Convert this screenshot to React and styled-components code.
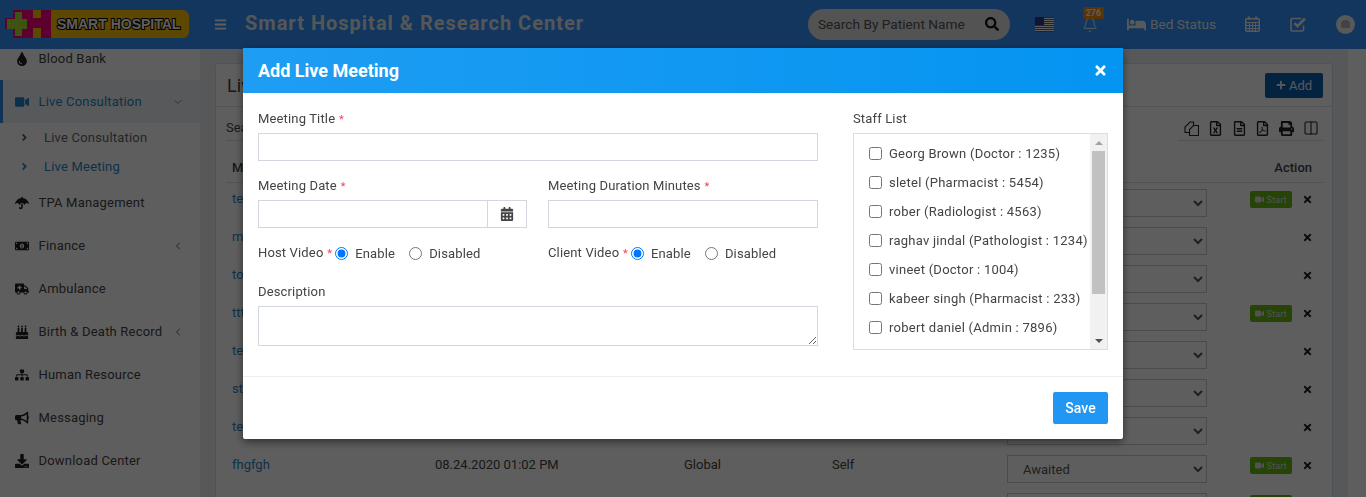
import styled, { createGlobalStyle } from 'styled-components';
import {
	FaAmbulance,
	FaAngleRight,
	FaBars,
	FaBed,
	FaBirthdayCake,
	FaBullhorn,
	FaCalendarAlt,
	FaDownload,
	FaMoneyBillAlt,
	FaPlus,
	FaPrint,
	FaRegFileAlt,
	FaRegFileExcel,
	FaRegFilePdf,
	FaSearch,
	FaSitemap,
	FaTimes,
	FaTint,
	FaUmbrella,
	FaVideo,
} from 'react-icons/fa';
import { Bell, ChevronDown, ChevronLeft, Columns2 } from 'lucide-react';

const GlobalStyle = createGlobalStyle`
	* {
		box-sizing: border-box;
	}
	html, body {
		margin: 0;
		height: 100%;
		overflow: hidden;
		font-family: Roboto, "Liberation Sans", sans-serif;
		font-size: 13px;
		color: #444;
	}
`;

const SPage = styled.div`
	height: 497px;
	overflow: hidden;
	background: #eef1f4;
	display: flex;
	flex-direction: column;
`;

const STopBar = styled.header`
	flex: 0 0 49px;
	display: flex;
	align-items: center;
	padding-bottom: 1px;
	background: #3392fb;
	color: #fff;
	position: relative;
	z-index: 2;
`;

const SLogo = styled.div`
	width: 184px;
	height: 28px;
	margin-left: 5px;
	display: flex;
	align-items: stretch;
	flex: none;
`;

const SLogoText = styled.div`
	flex: 1;
	background: #ffc000;
	border-radius: 0 6px 6px 0;
	font-family: "Liberation Sans", sans-serif;
	font-weight: 700;
	font-size: 14px;
	color: #fff;
	-webkit-text-stroke: 2px #000;
	paint-order: stroke fill;
	display: flex;
	align-items: center;
	padding-left: 6px;
	white-space: nowrap;
`;

const SMenuToggle = styled.div`
	margin-left: 25px;
	font-size: 13px;
	display: flex;
	color: #fff;
`;

const STitle = styled.div`
	margin-left: 18px;
	position: relative;
	top: -1px;
	font-size: 20px;
	font-weight: 700;
	letter-spacing: 1px;
	color: #e4e8ec;
	white-space: nowrap;
`;

const SSearch = styled.div`
	margin-left: auto;
	width: 202px;
	height: 31px;
	border-radius: 16px;
	background: #e0e0e0;
	display: flex;
	align-items: center;
	justify-content: space-between;
	padding: 0 11px 0 10px;
	color: #555;
	font-size: 13.7px;
	svg {
		color: #111;
		font-size: 14px;
	}
`;

const SFlag = styled.svg`
	width: 19px;
	height: 15px;
	margin-left: 25px;
`;

const SBell = styled.div`
	position: relative;
	margin-left: 28px;
	width: 16px;
	display: flex;
	top: 1px;
`;

const SBadge = styled.span`
	position: absolute;
	top: -10px;
	left: 1px;
	width: 21px;
	height: 12px;
	border-radius: 2px;
	background: #f58b12;
	font-size: 9px;
	font-weight: 700;
	line-height: 12px;
	text-align: center;
`;

const SBedStatus = styled.div`
	margin-left: 29px;
	display: flex;
	align-items: center;
	gap: 4px;
	font-size: 13.7px;
	color: #eef1f4;
	svg {
		font-size: 19px;
	}
`;

const SNavIcon = styled.svg`
	margin-left: ${({ $gap }) => $gap}px;
	width: ${({ $width }) => $width}px;
	height: 16px;
	color: #eef1f4;
	flex: none;
`;

const SAvatar = styled.div`
	width: 19px;
	height: 19px;
	border-radius: 50%;
	background: #f0f0f0;
	margin: 0 11px 0 29px;
	display: flex;
	align-items: center;
	justify-content: center;
	&::after {
		content: '';
		width: 9px;
		height: 8px;
		border-radius: 4px 4px 1px 1px;
		background: #b5b5b5;
	}
`;

const SMain = styled.div`
	flex: 1;
	display: flex;
	min-height: 0;
`;

const SSidebar = styled.nav`
	flex: 0 0 200px;
	background: #fff;
	overflow: hidden;
`;

const SMenu = styled.ul`
	list-style: none;
	margin: -12px 0 0;
	padding: 0;
`;

const SMenuItem = styled.li`
	height: 43px;
	display: flex;
	align-items: center;
	padding-left: ${({ $active }) => ($active ? 12 : 15)}px;
	padding-right: 16px;
	border-left: ${({ $active }) => ($active ? '3px solid #2f8ee8' : 'none')};
	background: ${({ $active }) => ($active ? '#eef1f4' : '#fff')};
	color: ${({ $active }) => ($active ? '#1f86c8' : '#444')};
	font-size: 13px;
	letter-spacing: 0.2px;
	svg {
		flex: none;
	}
`;

const SMenuIcon = styled.span`
	flex: 0 0 23.5px;
	display: flex;
	font-size: 14px;
	color: ${({ $active }) => ($active ? '#1f86c8' : '#222')};
`;

const SMenuLabel = styled.span`
	flex: 1;
	white-space: nowrap;
`;

const SSubMenu = styled.ul`
	list-style: none;
	margin: 0;
	padding: 0;
`;

const SSubItem = styled.li`
	height: 29px;
	display: flex;
	align-items: center;
	padding-left: 19px;
	gap: 16px;
	font-size: 13px;
	letter-spacing: 0.2px;
	color: ${({ $active }) => ($active ? '#1f86c8' : '#666')};
	svg {
		font-size: 11px;
		margin-right: -2px;
		color: ${({ $active }) => ($active ? '#1f86c8' : '#555')};
	}
`;

const SContent = styled.main`
	flex: 1;
	padding: 14px 15px 0;
	background: #eaeef2;
	min-width: 0;
`;

const SRightStrip = styled.div`
	flex: 0 0 18px;
	background: #fff;
`;

const SPanel = styled.section`
	background: #fff;
	border: 1px solid #d9dee3;
	border-radius: 3px 3px 0 0;
	padding-bottom: 20px;
`;

const SPanelHead = styled.div`
	height: 43px;
	display: flex;
	align-items: center;
	justify-content: space-between;
	padding: 0 9px 0 11px;
	border-bottom: 1px solid #e2e2e2;
	font-size: 18px;
`;

const SAddButton = styled.button`
	width: 58px;
	height: 25px;
	border: 0;
	border-radius: 2px;
	background: #0a5fb0;
	color: #e8f0f8;
	font: 13px Roboto, sans-serif;
	display: flex;
	align-items: center;
	justify-content: center;
	gap: 3px;
	svg {
		font-size: 10px;
	}
`;

const SPanelBody = styled.div`
	padding: 0 9px 0 10px;
`;

const SToolRow = styled.div`
	height: 34px;
	display: flex;
	align-items: flex-end;
	justify-content: space-between;
	font-size: 13px;
`;

const SSearchLabel = styled.div`
	padding-bottom: 5px;
	border-bottom: 1px solid #ddd;
	width: 160px;
`;

const STools = styled.div`
	width: 145px;
	height: 25px;
	padding: 0 4px 0 6px;
	display: flex;
	align-items: center;
	justify-content: space-between;
	border-bottom: 1px solid #ddd;
	font-size: 15px;
	color: #222;
`;

const SRow = styled.div`
	display: grid;
	grid-template-columns: 203px 249px 148px 175px 212px 1fr;
	align-items: flex-start;
	height: ${({ $head }) => ($head ? 42 : 38)}px;
	padding-top: ${({ $head }) => ($head ? 17 : 6)}px;
	border-bottom: ${({ $head }) => ($head ? '1px solid #ddd' : 'none')};
	font-weight: ${({ $head }) => ($head ? 500 : 400)};
	font-size: 13px;
`;

const SCell = styled.div`
	padding: 2px 6px 0;
	white-space: nowrap;
`;

const SNameCell = styled(SCell)`
	color: #1f86c8;
`;

const SSelectCell = styled.div`
	padding-left: 6px;
`;

const SStatus = styled.select`
	width: 200px;
	height: 28px;
	margin-top: 0;
	padding-left: 11px;
	border: 1px solid #ccc;
	background: #fff;
	color: #555;
	font: 13px Roboto, sans-serif;
`;

const SAction = styled.div`
	display: flex;
	justify-content: flex-end;
	align-items: center;
	gap: 10px;
	height: 20px;
	padding-right: 10px;
	font-size: 11px;
	color: #222;
	text-align: right;
`;

const SActionHead = styled(SCell)`
	text-align: right;
	padding-right: 11px;
`;

const SStartButton = styled.button`
	width: 42px;
	height: 17px;
	padding: 0;
	border: 0;
	border-radius: 2px;
	background: #66b812;
	color: #ddd;
	font: 9.5px Roboto, sans-serif;
	display: flex;
	align-items: center;
	justify-content: center;
	gap: 2px;
	svg {
		font-size: 9px;
	}
`;

const SBackdrop = styled.div`
	position: fixed;
	inset: 0;
	z-index: 10;
	background: rgba(0, 0, 0, 0.63);
	display: flex;
	justify-content: center;
	align-items: flex-start;
	padding-top: 48px;
`;

const SModal = styled.div`
	width: 880px;
	height: 391px;
	background: #fff;
	border-radius: 2px;
	box-shadow: 0 3px 9px rgba(0, 0, 0, 0.5);
	display: flex;
	flex-direction: column;
`;

const SModalHead = styled.div`
	flex: 0 0 45px;
	display: flex;
	align-items: center;
	justify-content: space-between;
	padding: 0 15px;
	background: linear-gradient(to right, #1e9df3, #0494f1);
	color: #fff;
`;

const SModalTitle = styled.h4`
	margin: 0;
	font-size: 18px;
	font-weight: 700;
`;

const SClose = styled.button`
	padding: 0;
	border: 0;
	background: none;
	color: #fff;
	font-size: 15px;
	display: flex;
`;

const SModalBody = styled.div`
	flex: 0 0 284px;
	display: grid;
	grid-template-columns: 560px 255px;
	justify-content: space-between;
	padding: 18px 15px 0;
	border-bottom: 1px solid #eee;
`;

const SFormGrid = styled.div`
	display: grid;
	grid-template-columns: 269px 270px;
	justify-content: space-between;
	align-content: flex-start;
`;

const SField = styled.div`
	grid-column: ${({ $wide }) => ($wide ? '1 / -1' : 'auto')};
	height: ${({ $height }) => $height}px;
`;

const SLabel = styled.label`
	display: block;
	height: 15px;
	margin-bottom: 7px;
	line-height: 15px;
	color: #444;
	letter-spacing: 0.15px;
	white-space: nowrap;
`;

const SRequired = styled.span`
	color: #f5405a;
	margin-left: 1px;
	font-size: 11px;
`;

const SInput = styled.input`
	display: block;
	width: 100%;
	height: 28px;
	border: 1px solid #d2d6de;
	background: #fff;
	outline: 0;
`;

const SInputGroup = styled.div`
	display: flex;
	${SInput} {
		flex: 1;
		min-width: 0;
		border-right: 0;
	}
`;

const SAddon = styled.span`
	flex: 0 0 40px;
	height: 28px;
	border: 1px solid #d2d6de;
	display: flex;
	align-items: center;
	justify-content: center;
	color: #444;
	font-size: 14px;
`;

const SRadioRow = styled.div`
	display: flex;
	align-items: center;
	height: 20px;
	white-space: nowrap;
`;

const SRadioLabel = styled.span`
	position: relative;
	top: -1px;
	letter-spacing: 0.15px;
`;

const SRadioOption = styled.label`
	display: flex;
	align-items: center;
	gap: 7px;
	margin-left: ${({ $gap }) => $gap}px;
	letter-spacing: 0.15px;
	input {
		margin: 0;
		width: 13px;
		height: 13px;
	}
`;

const STextarea = styled.textarea`
	display: block;
	width: 100%;
	height: 40px;
	border: 1px solid #d2d6de;
	background: #fff;
	outline: 0;
`;

const SStaffBox = styled.div`
	height: 217px;
	border: 1px solid #ddd;
	display: flex;
`;

const SStaffList = styled.ul`
	flex: 1;
	list-style: none;
	margin: 0;
	padding: 5px 0 0 15px;
	overflow: hidden;
`;

const SStaffItem = styled.li`
	height: 29px;
	display: flex;
	align-items: center;
	gap: 7px;
	white-space: nowrap;
	letter-spacing: 0.25px;
	input {
		margin: 0;
		width: 13px;
		height: 13px;
	}
`;

const SScrollTrack = styled.div`
	flex: 0 0 17px;
	background: #f1f1f1;
	display: flex;
	flex-direction: column;
	align-items: center;
`;

const SScrollArrow = styled.div`
	flex: 0 0 17px;
	display: flex;
	align-items: center;
	justify-content: center;
	margin-top: ${({ $down }) => ($down ? 'auto' : 0)};
	&::after {
		content: '';
		border-left: 4px solid transparent;
		border-right: 4px solid transparent;
		${({ $down }) => ($down ? 'border-top: 4px solid #505050;' : 'border-bottom: 4px solid #a3a3a3;')}
	}
`;

const SScrollThumb = styled.div`
	width: 13px;
	height: 143px;
	background: #c1c1c1;
`;

const SModalFoot = styled.div`
	flex: 1;
	display: flex;
	justify-content: flex-end;
	align-items: flex-start;
	padding: 15px 15px 0;
`;

const SSave = styled.button`
	width: 55px;
	height: 32px;
	border: 0;
	border-radius: 2px;
	background: #2196f3;
	color: #fff;
	font: 500 14px Roboto, sans-serif;
`;

const menuBefore = [{ label: 'Blood Bank', icon: FaTint }];

const menuAfter = [
	{ label: 'TPA Management', icon: FaUmbrella },
	{ label: 'Finance', icon: FaMoneyBillAlt, arrow: true },
	{ label: 'Ambulance', icon: FaAmbulance },
	{ label: 'Birth & Death Record', icon: FaBirthdayCake, arrow: true },
	{ label: 'Human Resource', icon: FaSitemap },
	{ label: 'Messaging', icon: FaBullhorn },
	{ label: 'Download Center', icon: FaDownload },
];

const meetings = [
	{ name: 'test live', date: '08.28.2020 11:30 AM', start: true },
	{ name: 'meeting', date: '08.27.2020 04:15 PM' },
	{ name: 'today', date: '08.27.2020 10:00 AM' },
	{ name: 'ttttt', date: '08.26.2020 03:45 PM', start: true },
	{ name: 'test', date: '08.26.2020 12:20 PM' },
	{ name: 'staff', date: '08.25.2020 05:10 PM' },
	{ name: 'test 2', date: '08.25.2020 02:05 PM' },
	{ name: 'fhgfgh', date: '08.24.2020 01:02 PM', start: true },
	{ name: 'fgfdg', date: '08.24.2020 11:02 AM', start: true },
];

const staff = [
	'Georg Brown (Doctor : 1235)',
	'sletel (Pharmacist : 5454)',
	'rober (Radiologist : 4563)',
	'raghav jindal (Pathologist : 1234)',
	'vineet (Doctor : 1004)',
	'kabeer singh (Pharmacist : 233)',
	'robert daniel (Admin : 7896)',
];

const Logo = () => (
	<SLogo>
		<svg width="46" height="28" viewBox="0 0 46 28">
			<path d="M8 0h38v28H8v-9H0V8h8z" fill="#ff0080" />
			<path d="M10 2h7v7h5v10h-5v7h-7v-7H2V9h8z" fill="#a8e030" />
			<path d="M28 0h8v8h-8zM28 18h8v10h-8z" fill="#ffc000" />
		</svg>
		<SLogoText>SMART HOSPITAL</SLogoText>
	</SLogo>
);

const Flag = () => (
	<SFlag viewBox="0 0 19 15">
		<rect width="19" height="15" fill="#fff" />
		{[0, 2, 4, 6, 8, 10, 12, 14].map((y) => (
			<rect key={y} y={y} width="19" height="1" fill="#d8283c" />
		))}
		<rect width="9" height="8" fill="#2c3a86" />
	</SFlag>
);

const CalendarIcon = () => (
	<SNavIcon $gap={29} $width={15} viewBox="0 0 15 16" fill="none" stroke="currentColor">
		<rect x="0.75" y="2.75" width="13.5" height="12.5" rx="1" strokeWidth="1.5" />
		<path d="M1 6.5h13M1 9.5h13M1 12.5h13M4.5 6v9M7.5 6v9M10.5 6v9" strokeWidth="1" />
		<path d="M3.8 0.5v3M11.2 0.5v3" strokeWidth="2" />
	</SNavIcon>
);

const CheckSquareIcon = () => (
	<SNavIcon $gap={30} $width={17} viewBox="0 0 17 16" fill="none" stroke="currentColor">
		<path d="M13.5 9.5v4.2a1.3 1.3 0 0 1-1.3 1.3H2.3A1.3 1.3 0 0 1 1 13.7V3.8a1.3 1.3 0 0 1 1.3-1.3h9" strokeWidth="1.6" />
		<path d="M4.5 7.2l3 3 7.5-7.7" strokeWidth="2.6" />
	</SNavIcon>
);

const CopyIcon = () => (
	<svg width="15" height="15" viewBox="0 0 15 15" fill="none" stroke="currentColor" strokeWidth="1.1">
		<path d="M9.5 4V1H6L1 6v5.5h4.5" />
		<path d="M9.5 4.5h5v10h-9V8.5z" />
	</svg>
);

const TopBar = () => (
	<STopBar>
		<Logo />
		<SMenuToggle>
			<FaBars />
		</SMenuToggle>
		<STitle>Smart Hospital &amp; Research Center</STitle>
		<SSearch>
			<span>Search By Patient Name</span>
			<FaSearch />
		</SSearch>
		<Flag />
		<SBell>
			<Bell size={16} strokeWidth={1.4} />
			<SBadge>276</SBadge>
		</SBell>
		<SBedStatus>
			<FaBed />
			Bed Status
		</SBedStatus>
		<CalendarIcon />
		<CheckSquareIcon />
		<SAvatar />
	</STopBar>
);

const MenuEntry = ({ item }) => {
	const Icon = item.icon;
	return (
		<SMenuItem>
			<SMenuIcon>
				<Icon />
			</SMenuIcon>
			<SMenuLabel>{item.label}</SMenuLabel>
			{item.arrow && <ChevronLeft size={12} strokeWidth={1.6} />}
		</SMenuItem>
	);
};

const Sidebar = () => (
	<SSidebar>
		<SMenu>
			{menuBefore.map((item) => (
				<MenuEntry key={item.label} item={item} />
			))}
			<SMenuItem $active>
				<SMenuIcon $active>
					<FaVideo />
				</SMenuIcon>
				<SMenuLabel>Live Consultation</SMenuLabel>
				<ChevronDown size={12} strokeWidth={1.6} />
			</SMenuItem>
			<SSubMenu>
				<SSubItem>
					<FaAngleRight />
					Live Consultation
				</SSubItem>
				<SSubItem $active>
					<FaAngleRight />
					Live Meeting
				</SSubItem>
			</SSubMenu>
			{menuAfter.map((item) => (
				<MenuEntry key={item.label} item={item} />
			))}
		</SMenu>
	</SSidebar>
);

const MeetingsPanel = () => (
	<SPanel>
		<SPanelHead>
			Live Meeting
			<SAddButton>
				<FaPlus />
				Add
			</SAddButton>
		</SPanelHead>
		<SPanelBody>
			<SToolRow>
				<SSearchLabel>Search...</SSearchLabel>
				<STools>
					<CopyIcon />
					<FaRegFileExcel />
					<FaRegFileAlt />
					<FaRegFilePdf />
					<FaPrint />
					<Columns2 size={16} strokeWidth={1.6} />
				</STools>
			</SToolRow>
			<SRow $head>
				<SCell>Meeting Title</SCell>
				<SCell>Date</SCell>
				<SCell>Host</SCell>
				<SCell>Created By</SCell>
				<SCell>Status</SCell>
				<SActionHead>Action</SActionHead>
			</SRow>
			{meetings.map((meeting) => (
				<SRow key={meeting.name}>
					<SNameCell>{meeting.name}</SNameCell>
					<SCell>{meeting.date}</SCell>
					<SCell>Global</SCell>
					<SCell>Self</SCell>
					<SSelectCell>
						<SStatus defaultValue="Awaited">
							<option>Awaited</option>
							<option>Cancelled</option>
							<option>Finished</option>
						</SStatus>
					</SSelectCell>
					<SAction>
						{meeting.start && (
							<SStartButton>
								<FaVideo />
								Start
							</SStartButton>
						)}
						<FaTimes />
					</SAction>
				</SRow>
			))}
		</SPanelBody>
	</SPanel>
);

const RadioGroup = ({ label, name, secondGap }) => (
	<SRadioRow>
		<SRadioLabel>
			{label}
			<SRequired> *</SRequired>
		</SRadioLabel>
		<SRadioOption $gap={3}>
			<input type="radio" name={name} defaultChecked />
			Enable
		</SRadioOption>
		<SRadioOption $gap={secondGap}>
			<input type="radio" name={name} />
			Disabled
		</SRadioOption>
	</SRadioRow>
);

const AddMeetingModal = () => (
	<SBackdrop>
		<SModal>
			<SModalHead>
				<SModalTitle>Add Live Meeting</SModalTitle>
				<SClose aria-label="Close">
					<FaTimes />
				</SClose>
			</SModalHead>
			<SModalBody>
				<SFormGrid>
					<SField $wide $height={67}>
						<SLabel>
							Meeting Title<SRequired> *</SRequired>
						</SLabel>
						<SInput type="text" />
					</SField>
					<SField $height={65}>
						<SLabel>
							Meeting Date<SRequired> *</SRequired>
						</SLabel>
						<SInputGroup>
							<SInput type="text" />
							<SAddon>
								<FaCalendarAlt />
							</SAddon>
						</SInputGroup>
					</SField>
					<SField $height={65}>
						<SLabel>
							Meeting Duration Minutes<SRequired> *</SRequired>
						</SLabel>
						<SInput type="text" />
					</SField>
					<SField $height={41}>
						<RadioGroup label="Host Video" name="host" secondGap={14} />
					</SField>
					<SField $height={41}>
						<RadioGroup label="Client Video" name="client" secondGap={14} />
					</SField>
					<SField $wide $height={63}>
						<SLabel>Description</SLabel>
						<STextarea />
					</SField>
				</SFormGrid>
				<div>
					<SLabel>Staff List</SLabel>
					<SStaffBox>
						<SStaffList>
							{staff.map((person) => (
								<SStaffItem key={person}>
									<input type="checkbox" />
									{person}
								</SStaffItem>
							))}
						</SStaffList>
						<SScrollTrack>
							<SScrollArrow />
							<SScrollThumb />
							<SScrollArrow $down />
						</SScrollTrack>
					</SStaffBox>
				</div>
			</SModalBody>
			<SModalFoot>
				<SSave>Save</SSave>
			</SModalFoot>
		</SModal>
	</SBackdrop>
);

const App = () => (
	<>
		<GlobalStyle />
		<SPage>
			<TopBar />
			<SMain>
				<Sidebar />
				<SContent>
					<MeetingsPanel />
				</SContent>
				<SRightStrip />
			</SMain>
		</SPage>
		<AddMeetingModal />
	</>
);

export default App;
